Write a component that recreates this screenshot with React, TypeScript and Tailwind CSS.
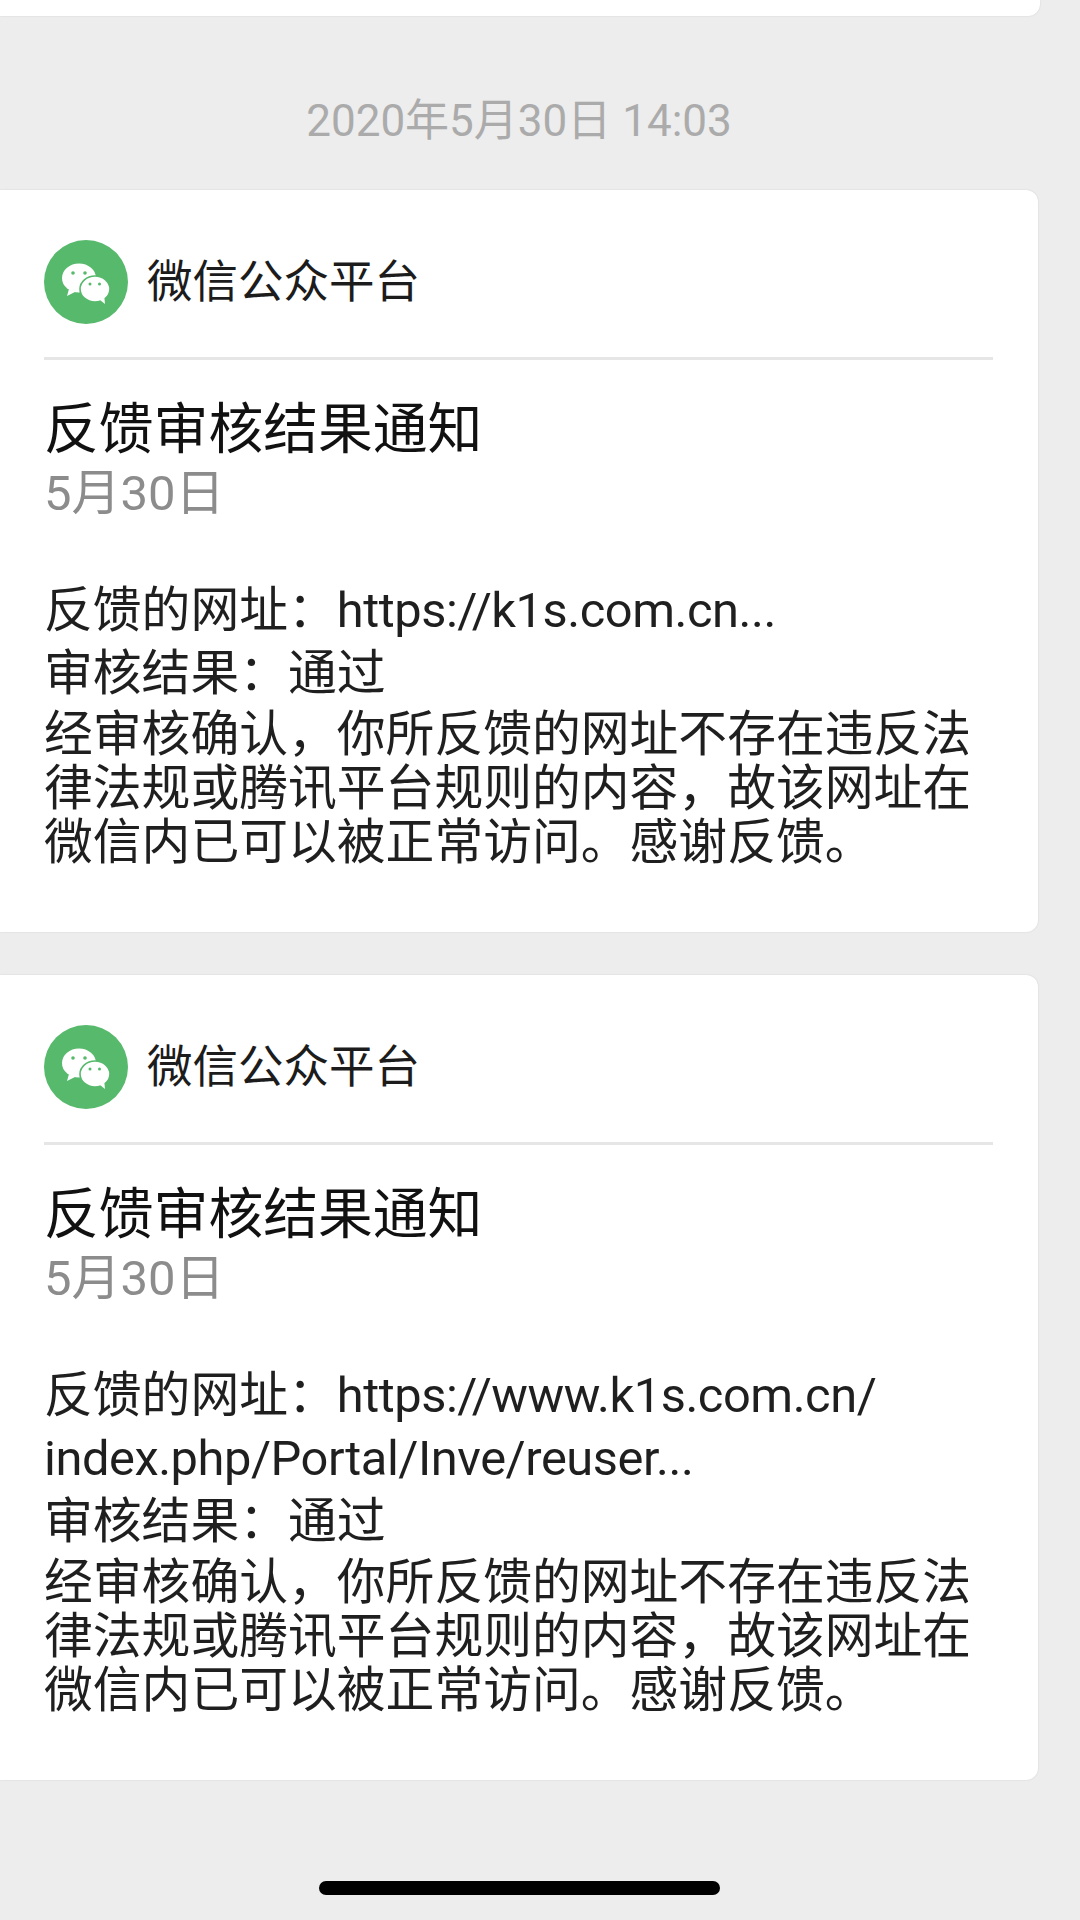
const fontStack = "font-['Roboto','Noto_Sans_CJK_SC',sans-serif]";

function WechatLogo() {
  return (
    <svg viewBox="0 0 84 84" className="h-[84px] w-[84px] shrink-0">
      <circle cx="42" cy="42" r="42" fill="#57b96c" />
      {/* back bubble */}
      <ellipse cx="35" cy="38" rx="17" ry="14.5" fill="#fff" />
      <path d="M25 49 L23 56 L33 51 Z" fill="#fff" />
      <circle cx="29" cy="33" r="1.8" fill="#57b96c" />
      <circle cx="41" cy="33" r="1.8" fill="#57b96c" />
      {/* front bubble */}
      <ellipse cx="51" cy="49" rx="15" ry="13" fill="#fff" stroke="#57b96c" strokeWidth="1.6" />
      <path d="M56 60 L61 64 L60 54 Z" fill="#fff" />
      <circle cx="46" cy="44" r="1.5" fill="#57b96c" />
      <circle cx="55.5" cy="44" r="1.5" fill="#57b96c" />
    </svg>
  );
}

function NoticeCard({ urlLines }: { urlLines: { label?: string; url: string }[] }) {
  return (
    <div className="w-[1038px] rounded-r-[12px] bg-white pr-[45px] pl-[44px] shadow-[0_0_2px_rgba(0,0,0,0.12)]">
      <div className="flex items-center gap-[19px] border-b-[3px] border-[#e6e6e6] pt-[50px] pb-[33px]">
        <WechatLogo />
        <span className="pt-[2px] text-[45.5px] leading-[60px] text-[#1c1c1c]">微信公众平台</span>
      </div>
      <h2 className="mt-[37px] text-[54.8px] leading-[64px] font-normal text-[#111]">反馈审核结果通知</h2>
      <p className="text-[49px] leading-[66px] text-[#8c8c8c]">5月30日</p>
      <div className="mt-[52px] pb-[62px] text-[#1f1f1f]">
        {urlLines.map((line) => (
          <p key={line.url} className="text-[48.8px] leading-[63px]">
            {line.label}
            <span className="tracking-[-0.45px]">{line.url}</span>
          </p>
        ))}
        <p className="mb-[3px] text-[48.8px] leading-[63px]">审核结果：通过</p>
        <p className="text-[48.8px] leading-[54px]">
          经审核确认，你所反馈的网址不存在违反法律法规或腾讯平台规则的内容，故该网址在微信内已可以被正常访问。感谢反馈。
        </p>
      </div>
    </div>
  );
}

export default function App() {
  return (
    <div className={`flex h-[1920px] w-[1080px] flex-col overflow-hidden bg-[#ededed] ${fontStack}`}>
      <div className="h-[16px] w-[1040px] shrink-0 rounded-br-[12px] bg-white shadow-[0_0_2px_rgba(0,0,0,0.12)]" />
      <div className="flex h-[174px] shrink-0 items-center justify-center pt-[36px] pr-[42px] text-[44px] text-[#ababab]">
        2020年5月30日 14:03
      </div>
      <NoticeCard urlLines={[{ label: '反馈的网址：', url: 'https://k1s.com.cn...' }]} />
      <div className="h-[43px] shrink-0" />
      <NoticeCard
        urlLines={[
          { label: '反馈的网址：', url: 'https://www.k1s.com.cn/' },
          { url: 'index.php/Portal/Inve/reuser...' },
        ]}
      />
      <div className="mt-auto mb-[25px] flex justify-center pr-[42px]">
        <div className="h-[14px] w-[401px] rounded-full bg-black" />
      </div>
    </div>
  );
}
